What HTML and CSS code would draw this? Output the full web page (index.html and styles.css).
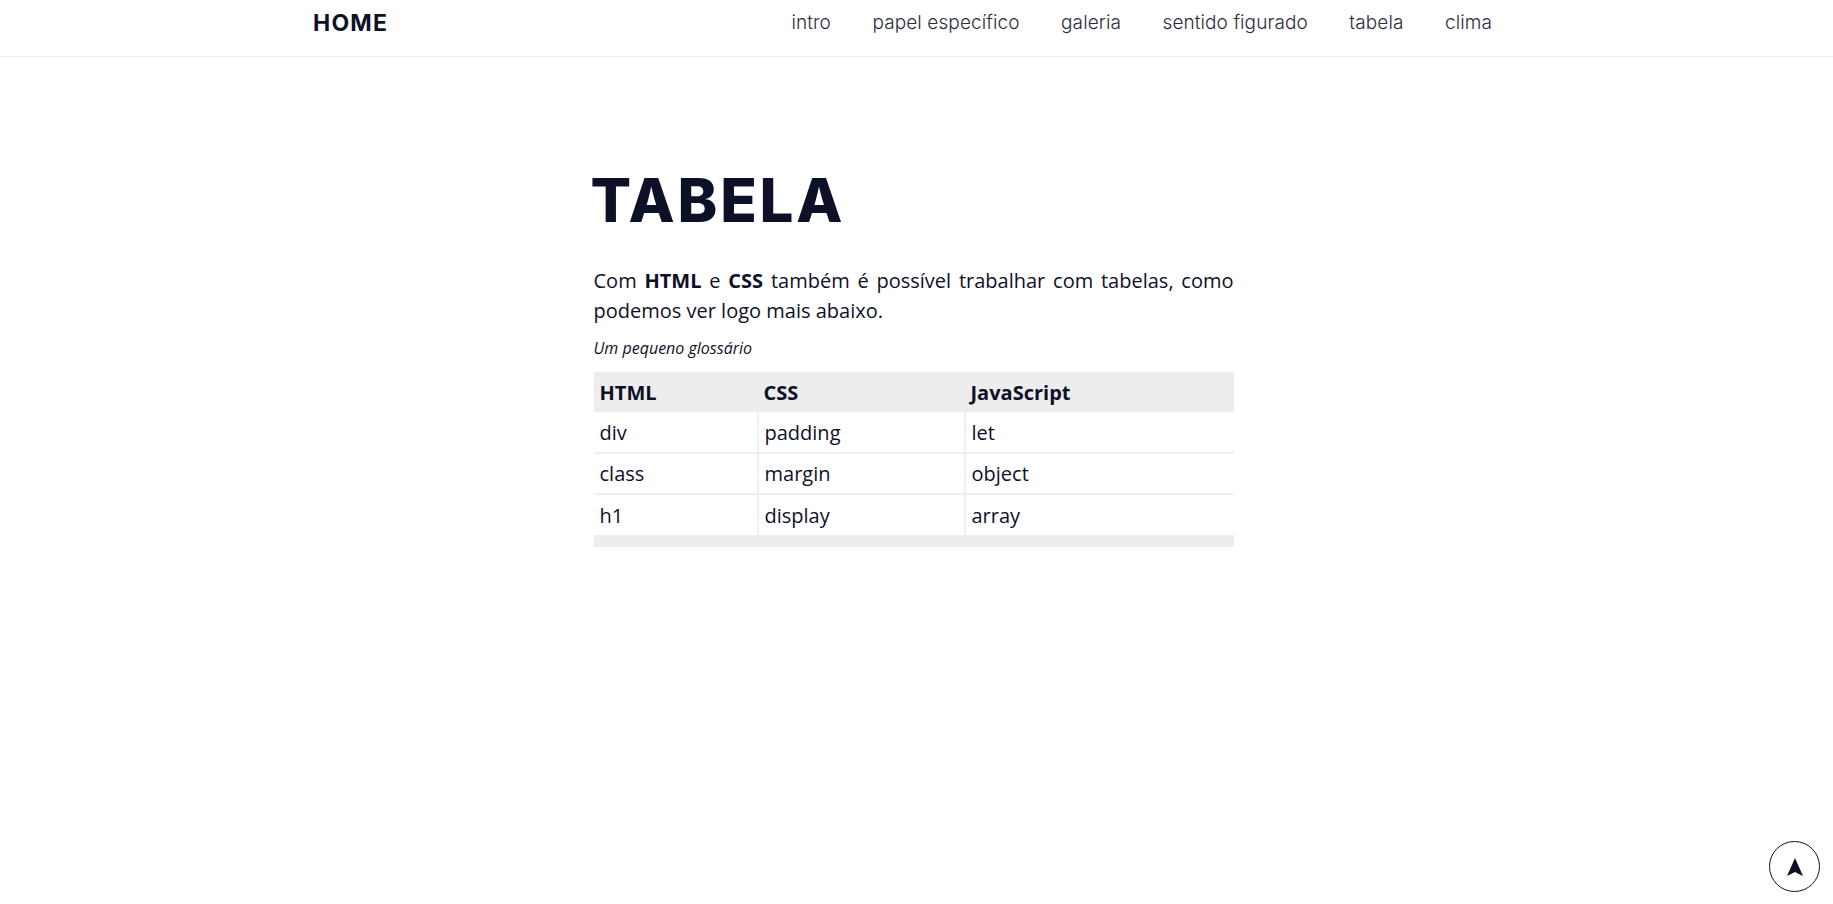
FILE: index.html
```
<!DOCTYPE html>
<html lang="pt-BR">
<head>
<meta charset="utf-8">
<title>Tabela</title>
<link rel="stylesheet" href="styles.css">
</head>
<body>
<header class="topbar">
  <div class="topbar-inner">
    <a class="brand" href="#">HOME</a>
    <nav class="menu">
      <a href="#">intro</a>
      <a href="#">papel específico</a>
      <a href="#">galeria</a>
      <a href="#">sentido figurado</a>
      <a href="#">tabela</a>
      <a href="#">clima</a>
    </nav>
  </div>
</header>
<main class="content">
  <h1 class="title">TABELA</h1>
  <p class="lead">Com <strong>HTML</strong> e <strong>CSS</strong> também é possível trabalhar com tabelas, como podemos ver logo mais abaixo.</p>
  <table class="glossary">
    <caption>Um pequeno glossário</caption>
    <thead>
      <tr><th class="c1">HTML</th><th class="c2">CSS</th><th class="c3">JavaScript</th></tr>
    </thead>
    <tbody>
      <tr><td>div</td><td>padding</td><td>let</td></tr>
      <tr><td>class</td><td>margin</td><td>object</td></tr>
      <tr><td>h1</td><td>display</td><td>array</td></tr>
    </tbody>
    <tfoot>
      <tr><td colspan="3"></td></tr>
    </tfoot>
  </table>
</main>
<a class="to-top" href="#" aria-label="Voltar ao topo">
  <svg width="18" height="20" viewBox="0 0 18 20"><path d="M9 1 L17 19 L9 15 L1 19 Z" fill="#0d1128"/></svg>
</a>
</body>
</html>
```
FILE: styles.css
```
* { box-sizing: border-box; }
html, body { margin: 0; padding: 0; background: #fff; }
body { font-family: "Open Sans", "Liberation Sans", sans-serif; color: #0d1128; }
a { text-decoration: none; color: inherit; }

.topbar { height: 57px; border-bottom: 1px solid #ececec; }
.topbar-inner {
  height: 45px;
  display: flex;
  align-items: center;
  justify-content: space-between;
  padding-left: 313px;
  padding-right: 341px;
}
.brand {
  font-family: "Inter", "DejaVu Sans", sans-serif;
  font-weight: 700;
  font-size: 23px;
  letter-spacing: 1.2px;
  color: #0d1128;
}
.menu { display: flex; gap: 41.5px; }
.menu a {
  font-family: "Inter", "DejaVu Sans", sans-serif;
  font-weight: 300;
  font-size: 19px;
  letter-spacing: 0.1px;
  color: #2a2d3c;
}

.content {
  width: 640px;
  margin: 0 auto;
  padding-top: 113px;
  position: relative;
  left: -3px;
}
.title {
  font-family: "Inter", "DejaVu Sans", sans-serif;
  font-weight: 800;
  font-size: 60px;
  letter-spacing: 2.8px;
  line-height: 1;
  margin: 0 0 36px -3px;
  color: #0d1128;
}
.lead {
  font-size: 20px;
  line-height: 30px;
  text-align: justify;
  margin: 0 0 11px;
}
.lead strong { font-weight: 700; }

.glossary {
  width: 640px;
  border-collapse: collapse;
  font-size: 20px;
}
.glossary caption {
  caption-side: top;
  text-align: left;
  font-style: italic;
  font-size: 16px;
  padding-bottom: 13px;
}
.glossary th, .glossary td {
  text-align: left;
  padding: 0 6px;
  height: 41px;
}
.glossary thead th { background: #ededed; font-weight: 700; height: 40px; }
.glossary tbody td { border: 2px solid #efefef; }
.glossary tbody tr:first-child td { border-top: 0; }
.glossary tbody td:first-child { border-left: 0; }
.glossary tbody td:last-child { border-right: 0; }
.glossary tbody tr:last-child td { border-bottom: 0; }
.glossary tfoot td { background: #ededed; height: 12px; padding: 0; }
.c1 { width: 164px; }
.c2 { width: 207px; }

.to-top {
  position: fixed;
  right: 13px;
  bottom: 12px;
  width: 51px;
  height: 51px;
  border: 1.5px solid #0d1128;
  border-radius: 50%;
  display: flex;
  align-items: center;
  justify-content: center;
  background: #fff;
}
```
